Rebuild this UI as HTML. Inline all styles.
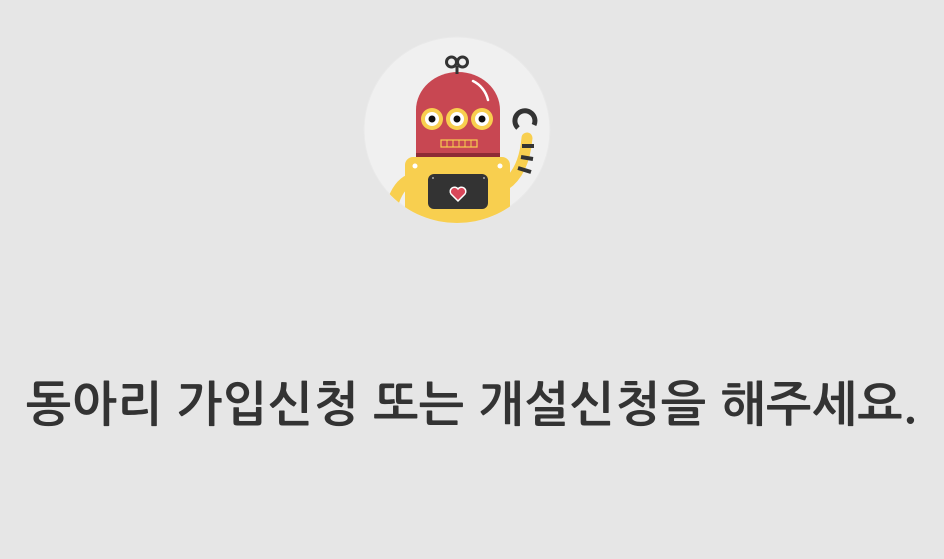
<!DOCTYPE html>
<html><head><meta charset="utf-8"><style>
html,body{margin:0;padding:0;background:#e6e6e6;width:944px;height:559px;overflow:hidden}
svg{position:absolute;left:0;top:0}
h1{position:absolute;left:0;width:944px;top:371px;margin:0;text-align:center;font:bold 48px "NanumGothic","Noto Sans CJK KR",sans-serif;color:#333;line-height:70px;white-space:nowrap;letter-spacing:0.5px}
</style></head><body>
<svg width="944" height="260" viewBox="0 0 944 260">
<defs><clipPath id="c"><circle cx="457" cy="130" r="93"/></clipPath></defs>
<circle cx="457" cy="130" r="93" fill="#f0f0f0" stroke="#e9e9e9"/>
<g clip-path="url(#c)">
<path d="M505 185 Q524 172 527 138" stroke="#f8cf4f" stroke-width="11" fill="none" stroke-linecap="round"/>
<path d="M518 168l13 4M521 157l12 2M522 146l12 0" stroke="#333" stroke-width="4"/>
<path d="M518 128 A10 10 0 1 1 534 125" stroke="#333" stroke-width="5" fill="none"/>
<path d="M410 180 Q398 185 392 205" stroke="#f8cf4f" stroke-width="12" fill="none"/>
<path d="M388 198l6 5" stroke="#333" stroke-width="4"/>
<rect x="405" y="157" width="105" height="80" rx="8" fill="#f8cf4f"/>
<circle cx="415" cy="166" r="2.5" fill="#fff"/><circle cx="500" cy="166" r="2.5" fill="#fff"/>
<rect x="428" y="174" width="60" height="35" rx="6" fill="#333"/>
<circle cx="433" cy="178" r="1" fill="#aaa"/><circle cx="484" cy="178" r="1" fill="#aaa"/>
<path d="M458 201 l-7 -7 a4 4 0 0 1 7 -5 a4 4 0 0 1 7 5z" fill="#d9475a" stroke="#fff" stroke-width="1.5"/>
<path d="M416 157 V110 a42 38 0 0 1 84 0 V157z" fill="#c84752"/>
<rect x="416" y="153" width="84" height="4" fill="#8e2b35"/>
<path d="M473 81 a28 28 0 0 1 15 19" stroke="#fff" stroke-width="2.5" fill="none" stroke-linecap="round"/>
<circle cx="432" cy="119" r="11" fill="#f8cf4f"/><circle cx="432" cy="119" r="7" fill="#fff"/><circle cx="432" cy="119" r="3.5" fill="#111"/>
<circle cx="457" cy="119" r="11" fill="#f8cf4f"/><circle cx="457" cy="119" r="7" fill="#fff"/><circle cx="457" cy="119" r="3.5" fill="#111"/>
<circle cx="482" cy="119" r="11" fill="#f8cf4f"/><circle cx="482" cy="119" r="7" fill="#fff"/><circle cx="482" cy="119" r="3.5" fill="#111"/>
<rect x="441" y="140" width="36" height="7" fill="none" stroke="#f8cf4f" stroke-width="1.2"/>
<path d="M447 140v7M453 140v7M459 140v7M465 140v7M471 140v7" stroke="#f8cf4f" stroke-width="1"/>
<line x1="457" y1="66" x2="457" y2="74" stroke="#333" stroke-width="3"/>
<circle cx="451.5" cy="62" r="5" fill="none" stroke="#333" stroke-width="3"/>
<circle cx="462.5" cy="62" r="5" fill="none" stroke="#333" stroke-width="3"/>
</g>
</svg>
<h1>동아리 가입신청 또는 개설신청을 해주세요.</h1>
</body></html>
